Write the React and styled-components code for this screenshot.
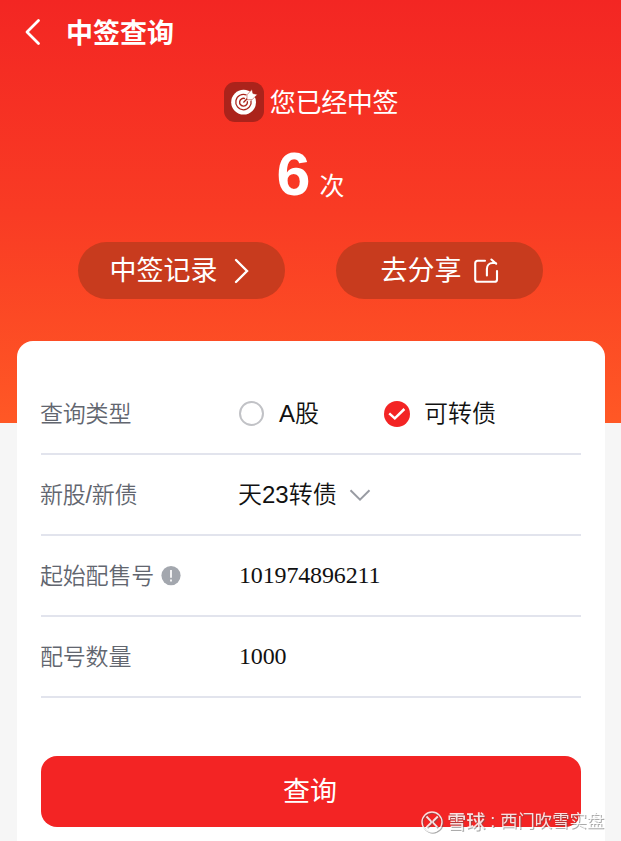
import React from "react";
import styled, { createGlobalStyle } from "styled-components";

const GlobalStyle = createGlobalStyle`
    * {
        box-sizing: border-box;
    }
    body {
        margin: 0;
        background: #f6f6f6;
        font-family: "Liberation Sans", "Noto Sans CJK SC", sans-serif;
    }
    button {
        border: 0;
        padding: 0;
        font-family: inherit;
    }
    svg {
        display: block;
        flex: none;
    }
`;

const Page = styled.div`
    position: relative;
    width: 621px;
    height: 841px;
    overflow: hidden;
`;

const Header = styled.header`
    height: 423px;
    background: linear-gradient(180deg, #f32623 0%, #f93b24 50%, #ff5825 100%);
    color: #fff;
`;

const NavBar = styled.div`
    display: flex;
    align-items: center;
    height: 64px;
    padding-left: 24px;
`;

const Title = styled.h1`
    margin: 3px 0 0 25px;
    font-size: 27px;
    line-height: 40px;
    font-weight: 700;
`;

// CJK glyphs sit low in the line box, the bottom margin lifts them to the optical middle
const Text = styled.span`
    margin-bottom: ${({ $lift = 4 }) => $lift}px;
`;

const Summary = styled.div`
    display: flex;
    align-items: center;
    justify-content: center;
    height: 40px;
    margin-top: 18px;
    padding-left: 1px;
    gap: 6px;
    font-size: 26px;
    letter-spacing: -0.3px;
`;

const TargetBadge = styled.div`
    display: flex;
    align-items: center;
    justify-content: center;
    width: 40px;
    height: 40px;
    border-radius: 11px;
    background: #ab231b;
`;

const Count = styled.div`
    display: flex;
    align-items: baseline;
    justify-content: center;
    height: 70px;
    margin-top: 17px;
    line-height: 70px;
`;

const CountNumber = styled.span`
    font-size: 61px;
    font-weight: 700;
`;

const CountUnit = styled.span`
    margin-left: 9px;
    font-size: 25px;
`;

const Actions = styled.div`
    display: flex;
    justify-content: center;
    gap: 51px;
    margin-top: 33px;
`;

const PillButton = styled.button`
    display: flex;
    align-items: center;
    justify-content: center;
    gap: ${({ $gap }) => $gap}px;
    width: 207px;
    height: 57px;
    padding-right: ${({ $shift = 0 }) => $shift}px;
    border-radius: 29px;
    background: #c83b1e;
    color: #fff;
    font-size: 27px;
`;

const Card = styled.main`
    height: 560px;
    margin: -82px 16px 0 17px;
    padding: 33px 24px 0;
    border-radius: 16px;
    background: #fff;
`;

const Row = styled.div`
    display: flex;
    align-items: center;
    height: 81px;
    border-bottom: 2px solid #e2e4ed;
`;

const Label = styled.div`
    display: flex;
    align-items: center;
    gap: 7px;
    width: 198px;
    margin-left: -1px;
    color: #62666f;
    font-size: 23px;
    font-weight: 350;
    letter-spacing: -0.2px;
`;

const Value = styled.div`
    display: flex;
    align-items: center;
    gap: 12px;
    color: #111;
    font-size: 24px;
    font-weight: 350;
`;

const NumberValue = styled(Value)`
    margin-left: 1px;
    font-family: "Liberation Serif", serif;
    font-weight: 400;
    letter-spacing: -0.15px;
`;

const Option = styled.div`
    display: flex;
    align-items: center;
    gap: ${({ $gap }) => $gap}px;
    width: 146px;
    white-space: nowrap;
    color: #111;
    font-size: 24px;
    font-weight: 350;
`;

const Radio = styled.span`
    width: 25px;
    height: 25px;
    margin-left: 1px;
    border: 2px solid #c1c2c6;
    border-radius: 50%;
`;

const SubmitButton = styled.button`
    display: flex;
    align-items: center;
    justify-content: center;
    width: 100%;
    height: 71px;
    margin-top: 58px;
    padding-right: 2px;
    border-radius: 16px;
    background: #f32424;
    color: #fff;
    font-size: 27px;
`;

const Watermark = styled.div`
    position: absolute;
    right: 17px;
    bottom: 5px;
    display: flex;
    align-items: center;
    gap: 4px;
    height: 28px;
    color: rgba(255, 255, 255, 0.85);
    font-size: 18px;
    white-space: nowrap;
    filter: drop-shadow(1px 1px 0.5px rgba(90, 90, 90, 0.6));
`;

const WatermarkBrand = styled.span`
    margin-bottom: 4px;
    font-size: 19px;
    font-weight: 500;
`;

const WatermarkColon = styled.span`
    width: 7px;
    margin-bottom: 2px;
    text-align: center;
`;

const WatermarkName = styled.span`
    margin-bottom: 5px;
    font-size: 17.3px;
`;

const BackIcon = () => (
    <svg width="17" height="28" viewBox="0 0 17 28" fill="none">
        <path d="M14.5 2.5 3 14l11.5 11.5" stroke="#fff" strokeWidth="2.8" strokeLinecap="round" strokeLinejoin="round" />
    </svg>
);

// dartboard with the arrow coming in from the top right
const TargetIcon = () => (
    <svg width="28" height="28" viewBox="0 0 28 28" fill="none">
        <circle cx="13.6" cy="14.2" r="12.4" fill="#fff" />
        <path d="M16.5 7A7.7 7.7 0 1 0 21 12.5" stroke="#ab231b" strokeWidth="1.3" />
        <path d="M15 10.6A3.9 3.9 0 1 0 17.3 13.2" stroke="#ab231b" strokeWidth="1.4" />
        <path d="m13.4 14.4 5-4.8" stroke="#ab231b" strokeWidth="1.4" />
        <path d="m17 6.8 4.9-5.3 1 4 4.5 1-5.2 5-5.2.3V6.8Z" fill="#fff" stroke="#ab231b" strokeWidth=".5" />
    </svg>
);

const RightIcon = () => (
    <svg width="16" height="26" viewBox="0 0 16 26" fill="none">
        <path d="m3 2 11 11L3 24" stroke="#fff" strokeWidth="2.4" strokeLinecap="round" />
    </svg>
);

const ShareIcon = () => (
    <svg width="26" height="26" viewBox="0 0 26 26" fill="none" stroke="#fff" strokeWidth="2.1" strokeLinecap="round">
        <path d="M12 2.8H4.6a2.4 2.4 0 0 0-2.4 2.4v16.2a2.4 2.4 0 0 0 2.4 2.4h17a2.4 2.4 0 0 0 2.4-2.4V13" />
        <path d="M13.9 17.5V11c0-3.4 2.3-6 5.7-6h3" />
        <path d="m18.4 1.5 4.8 4.2" />
    </svg>
);

const CheckedIcon = () => (
    <svg width="26" height="26" viewBox="0 0 26 26" fill="none">
        <circle cx="13" cy="13" r="13" fill="#f32424" />
        <path d="m5.2 12.4 5.6 5L20.4 8" stroke="#fff" strokeWidth="2.5" />
    </svg>
);

const DownIcon = () => (
    <svg width="22" height="14" viewBox="0 0 22 14" fill="none">
        <path d="m1.5 2.3 9.5 9.4 9.5-9.4" stroke="#999ca3" strokeWidth="2" />
    </svg>
);

const InfoIcon = () => (
    <svg width="20" height="20" viewBox="0 0 20 20" fill="none">
        <circle cx="10" cy="9.6" r="9.6" fill="#a3a7ae" />
        <path d="M10 4v7.8M10 13.5v2" stroke="#fff" strokeWidth="1.7" />
    </svg>
);

const SnowballIcon = () => (
    <svg width="22" height="22" viewBox="0 0 22 22" fill="none" stroke="currentColor">
        <circle cx="11" cy="11" r="10" strokeWidth="1.4" />
        <path d="m5.500 5.500 4.200 4.300c.7.800.7 1.700 0 2.400l-4.200 3.900M16.800 5.500l-4.300 4.200c-.7.800-.7 1.700 0 2.500l3.800 4" strokeWidth="1.9" />
    </svg>
);

const App = () => {
    return (
        <>
            <GlobalStyle />
            <Page>
                <Header>
                    <NavBar>
                        <BackIcon />
                        <Title>中签查询</Title>
                    </NavBar>
                    <Summary>
                        <TargetBadge><TargetIcon /></TargetBadge>
                        <Text>您已经中签</Text>
                    </Summary>
                    <Count>
                        <CountNumber>6</CountNumber>
                        <CountUnit>次</CountUnit>
                    </Count>
                    <Actions>
                        <PillButton $gap={15} $shift={5}><Text>中签记录</Text><RightIcon /></PillButton>
                        <PillButton $gap={11}><Text>去分享</Text><ShareIcon /></PillButton>
                    </Actions>
                </Header>
                <Card>
                    <Row>
                        <Label><Text>查询类型</Text></Label>
                        <Option $gap={15}><Radio /><Text>A股</Text></Option>
                        <Option $gap={14}><CheckedIcon /><Text>可转债</Text></Option>
                    </Row>
                    <Row>
                        <Label><Text>新股/新债</Text></Label>
                        <Value><Text>天23转债</Text><DownIcon /></Value>
                    </Row>
                    <Row>
                        <Label><Text>起始配售号</Text><InfoIcon /></Label>
                        <NumberValue>101974896211</NumberValue>
                    </Row>
                    <Row>
                        <Label><Text>配号数量</Text></Label>
                        <NumberValue>1000</NumberValue>
                    </Row>
                    <SubmitButton><Text>查询</Text></SubmitButton>
                </Card>
                <Watermark>
                    <SnowballIcon />
                    <WatermarkBrand>雪球</WatermarkBrand>
                    <WatermarkColon>:</WatermarkColon>
                    <WatermarkName>西门吹雪实盘</WatermarkName>
                </Watermark>
            </Page>
        </>
    );
};

export default App;
